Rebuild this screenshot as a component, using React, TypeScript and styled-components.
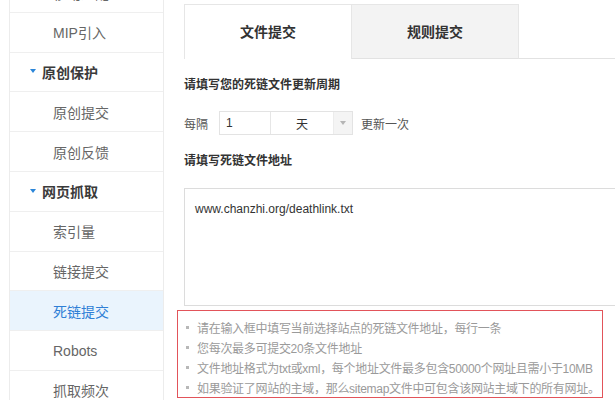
import React from "react";
import styled, { createGlobalStyle } from "styled-components";

const Global = createGlobalStyle`
  html, body { margin: 0; padding: 0; background: #fff; overflow: hidden; }
  body { font-family: "Liberation Sans", "Noto Sans CJK SC", sans-serif; }
  * { box-sizing: border-box; }
`;

const Page = styled.div`
  display: flex;
  width: 615px;
  height: 400px;
  overflow: hidden;
`;

const Sidebar = styled.nav`
  margin-left: 9px;
  width: 155px;
  flex: none;
  border-left: 1px solid #ececec;
  border-right: 1px solid #ececec;
  overflow: hidden;
`;

const MenuList = styled.ul`
  list-style: none;
  margin: -26px 0 0;
  padding: 0;
`;

const Item = styled.li<{ $active?: boolean; $group?: boolean }>`
  height: 39.8px;
  display: flex;
  align-items: center;
  gap: 6px;
  padding-left: ${(p) => (p.$group ? "20px" : "43px")};
  border-bottom: 1px solid #efefef;
  font-size: 14px;
  font-weight: ${(p) => (p.$group ? 700 : 400)};
  color: ${(p) => (p.$active ? "#2f7fd6" : p.$group ? "#3a3a3a" : "#666")};
  background: ${(p) => (p.$active ? "#eaf4fd" : "transparent")};
  &:first-child {
    height: 38.8px;
  }
`;

const Caret = styled.span`
  width: 0;
  height: 0;
  border-left: 3.5px solid transparent;
  border-right: 3.5px solid transparent;
  border-top: 4px solid #2b86d9;
  margin-top: -1px;
`;

const Main = styled.main`
  flex: 1;
  min-width: 0;
  padding: 4px 0 0 13px;
  overflow: hidden;
  display: flex;
  flex-direction: column;
`;

const Form = styled.div`
  padding-left: 7px;
  display: flex;
  flex-direction: column;
`;

const Tabs = styled.div`
  display: flex;
  height: 55px;
`;

const Tab = styled.div<{ $active?: boolean }>`
  width: ${(p) => (p.$active ? "168px" : "167px")};
  display: flex;
  align-items: center;
  justify-content: center;
  font-size: 14px;
  font-weight: 700;
  color: #333;
  border-top: 1px solid #e6e6e6;
  border-right: 1px solid #e6e6e6;
  border-left: ${(p) => (p.$active ? "1px solid #e6e6e6" : "none")};
  border-bottom: ${(p) => (p.$active ? "none" : "1px solid #e2e2e2")};
  background: ${(p) => (p.$active ? "#fff" : "#f3f3f3")};
  padding-bottom: 2px;
`;

const TabFill = styled.div`
  flex: 1;
  border-bottom: 1px solid #e2e2e2;
`;

const Label = styled.div<{ $top: number }>`
  margin-top: ${(p) => p.$top}px;
  font-size: 12px;
  line-height: 18px;
  font-weight: 700;
  color: #333;
`;

const Row = styled.div`
  margin-top: 17px;
  display: flex;
  align-items: center;
  font-size: 12px;
  color: #555;
  height: 24px;
`;

const Select = styled.div`
  margin-left: 11px;
  display: flex;
  height: 24px;
  border: 1px solid #e3e3e3;
`;

const NumBox = styled.div`
  width: 51px;
  padding-left: 6px;
  display: flex;
  align-items: center;
  font-size: 12px;
  color: #333;
  border-right: 1px solid #e6e6e6;
`;

const Unit = styled.div`
  width: 62px;
  display: flex;
  align-items: center;
  justify-content: center;
  font-size: 12px;
  color: #333;
`;

const Arrow = styled.div`
  width: 19px;
  display: flex;
  align-items: center;
  justify-content: center;
  background: #f4f4f4;
  border-left: 1px solid #ececec;
  &::after {
    content: "";
    border-left: 3px solid transparent;
    border-right: 3px solid transparent;
    border-top: 4px solid #b5b5b5;
  }
`;

const After = styled.span`
  margin-left: 8px;
`;

const TextArea = styled.div`
  margin-top: 18px;
  width: 520px;
  height: 118px;
  border: 1px solid #dcdcdc;
  padding: 11px 10px;
  font-size: 12px;
  line-height: 18px;
  color: #333;
`;

const Notes = styled.ul`
  margin: 4px 0 0;
  width: 426px;
  height: 88px;
  border: 1px solid #e2545a;
  list-style: none;
  padding: 6px 0 0 8px;
`;

const Note = styled.li`
  display: flex;
  align-items: center;
  gap: 8px;
  height: 20px;
  font-size: 12px;
  letter-spacing: -0.3px;
  color: #9a9a9a;
  white-space: nowrap;
  &::before {
    content: "";
    width: 3px;
    height: 3px;
    background: #b8b8b8;
    flex: none;
  }
`;

const menu: { label: string; group?: boolean; active?: boolean }[] = [
  { label: "移动适配" },
  { label: "MIP引入" },
  { label: "原创保护", group: true },
  { label: "原创提交" },
  { label: "原创反馈" },
  { label: "网页抓取", group: true },
  { label: "索引量" },
  { label: "链接提交" },
  { label: "死链提交", active: true },
  { label: "Robots" },
  { label: "抓取频次" },
];

const notes = [
  "请在输入框中填写当前选择站点的死链文件地址，每行一条",
  "您每次最多可提交20条文件地址",
  "文件地址格式为txt或xml，每个地址文件最多包含50000个网址且需小于10MB",
  "如果验证了网站的主域，那么sitemap文件中可包含该网站主域下的所有网址。",
];

export default function App() {
  return (
    <>
      <Global />
      <Page>
        <Sidebar>
          <MenuList>
            {menu.map((m) => (
              <Item key={m.label} $group={m.group} $active={m.active}>
                {m.group && <Caret />}
                {m.label}
              </Item>
            ))}
          </MenuList>
        </Sidebar>
        <Main>
          <Form>
            <Tabs>
              <Tab $active>文件提交</Tab>
              <Tab>规则提交</Tab>
              <TabFill />
            </Tabs>
            <Label $top={17}>请填写您的死链文件更新周期</Label>
            <Row>
              每隔
              <Select>
                <NumBox>1</NumBox>
                <Unit>天</Unit>
                <Arrow />
              </Select>
              <After>更新一次</After>
            </Row>
            <Label $top={17}>请填写死链文件地址</Label>
            <TextArea>www.chanzhi.org/deathlink.txt</TextArea>
          </Form>
          <Notes>
            {notes.map((n) => (
              <Note key={n}>{n}</Note>
            ))}
          </Notes>
        </Main>
      </Page>
    </>
  );
}
